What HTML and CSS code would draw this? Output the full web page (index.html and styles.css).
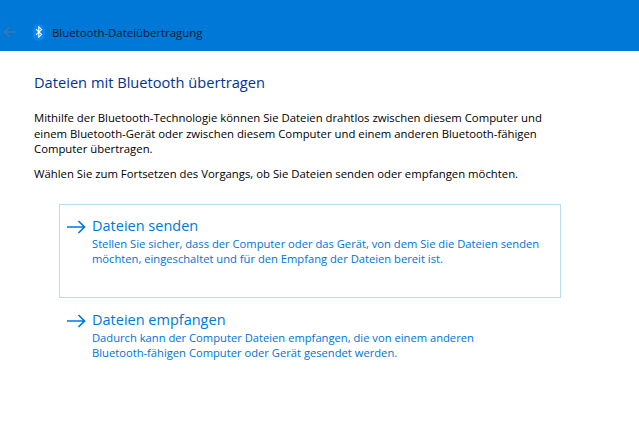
FILE: index.html
```html
<!DOCTYPE html>
<html lang="de">
<head>
<meta charset="utf-8">
<title>Bluetooth-Dateiübertragung</title>
<link rel="stylesheet" href="styles.css">
</head>
<body>
<header class="titlebar">
  <svg class="back" width="14" height="12" viewBox="0 0 14 12"><path d="M13 6H1.5M6.5 1L1.5 6l5 5" fill="none" stroke="#3b77ae" stroke-width="1.6"/></svg>
  <span class="bt-badge">
    <svg width="8" height="12" viewBox="0 0 8 12"><path d="M1 3.2L6.6 8.6 3.8 11.2V.8L6.6 3.4 1 8.8" fill="none" stroke="#fff" stroke-width="1.1"/></svg>
  </span>
  <span class="app-title">Bluetooth-Dateiübertragung</span>
</header>
<main class="content">
  <h1 class="heading">Dateien mit Bluetooth übertragen</h1>
  <p class="intro">Mithilfe der Bluetooth-Technologie können Sie Dateien drahtlos zwischen diesem Computer und<br>einem Bluetooth-Gerät oder zwischen diesem Computer und einem anderen Bluetooth-fähigen<br>Computer übertragen.</p>
  <p class="prompt">Wählen Sie zum Fortsetzen des Vorgangs, ob Sie Dateien senden oder empfangen möchten.</p>
  <div class="options">
    <a class="option selected">
      <svg class="arrow" width="19" height="14" viewBox="0 0 19 14"><path d="M0 7H17.5M11.5 1l6 6-6 6" fill="none" stroke="#0078e0" stroke-width="1.7"/></svg>
      <span class="option-text">
        <span class="option-title">Dateien senden</span>
        <span class="option-desc">Stellen Sie sicher, dass der Computer oder das Gerät, von dem Sie die Dateien senden<br>möchten, eingeschaltet und für den Empfang der Dateien bereit ist.</span>
      </span>
    </a>
    <a class="option">
      <svg class="arrow" width="19" height="14" viewBox="0 0 19 14"><path d="M0 7H17.5M11.5 1l6 6-6 6" fill="none" stroke="#0078e0" stroke-width="1.7"/></svg>
      <span class="option-text">
        <span class="option-title">Dateien empfangen</span>
        <span class="option-desc">Dadurch kann der Computer Dateien empfangen, die von einem anderen<br>Bluetooth-fähigen Computer oder Gerät gesendet werden.</span>
      </span>
    </a>
  </div>
</main>
</body>
</html>
```
FILE: styles.css
```css
* { box-sizing: border-box; }
html, body { margin: 0; padding: 0; }
body {
  width: 639px;
  height: 432px;
  overflow: hidden;
  background: #fff;
  font-family: "Open Sans", "Noto Sans", sans-serif;
  font-size: 11.33px;
  color: #000;
}
.titlebar {
  height: 51px;
  background: #0078d7;
  display: flex;
  align-items: center;
  padding: 13px 0 0 3px;
}
.back { flex: none; }
.bt-badge {
  width: 12px;
  height: 17px;
  margin-left: 16px;
  border-radius: 6px;
  background: #0a84f0;
  display: flex;
  align-items: center;
  justify-content: center;
}
.app-title {
  margin-left: 7px;
  font-size: 11.4px;
  color: #001a33;
}
.content { padding: 21px 0 0 34px; }
.heading {
  margin: 0;
  font-size: 14.65px;
  line-height: 20px;
  font-weight: 400;
  color: #003399;
}
.intro {
  margin: 18px 0 0;
  line-height: 15.5px;
  width: 570px;
}
.prompt { margin: 9px 0 0; line-height: 15px; }
.options {
  margin: 23px 0 0 25px;
  width: 502px;
}
.option {
  display: flex;
  height: 94px;
  padding: 11px 8px 0 7px;
  border: 1px solid transparent;
}
.option.selected { border-color: #bcdcf4; }
.arrow { flex: none; margin-top: 4px; }
.option-text {
  margin-left: 6px;
  display: flex;
  flex-direction: column;
}
.option-title {
  font-size: 14.5px;
  line-height: 20px;
  color: #0078d7;
}
.option-desc {
  font-size: 11.2px;
  line-height: 15px;
  color: #0072d8;
  white-space: nowrap;
}
```
